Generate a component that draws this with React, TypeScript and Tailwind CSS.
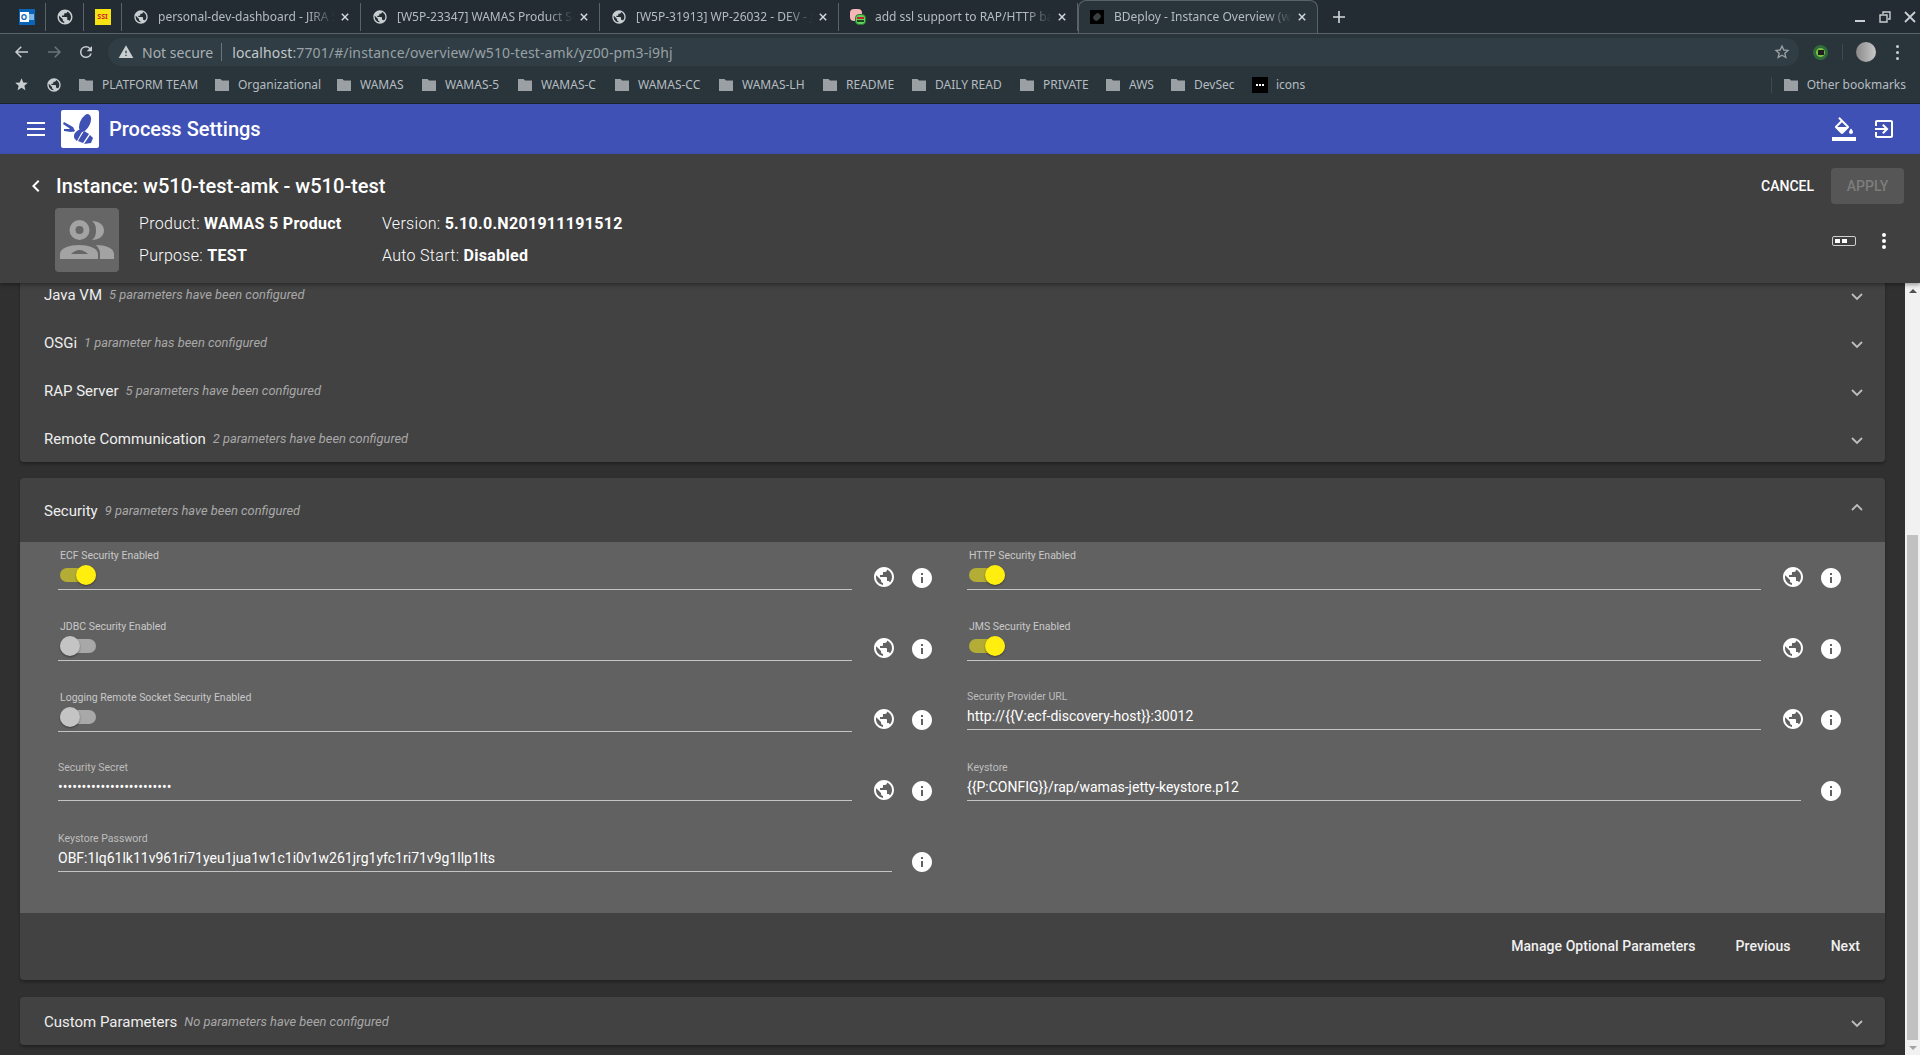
import type { ReactNode } from 'react';

const PUBLIC_ICON =
  'M12 2C6.48 2 2 6.48 2 12s4.48 10 10 10 10-4.48 10-10S17.52 2 12 2zm-1 17.93c-3.95-.49-7-3.85-7-7.93 0-.62.08-1.21.21-1.79L9 15v1c0 1.1.9 2 2 2v1.93zm6.9-2.54c-.26-.81-1-1.39-1.9-1.39h-1v-3c0-.55-.45-1-1-1H8v-2h2c.55 0 1-.45 1-1V7h2c1.1 0 2-.9 2-2v-.41c2.93 1.19 5 4.06 5 7.41 0 2.08-.8 3.97-2.1 5.39z';
const INFO_ICON =
  'M12 2C6.48 2 2 6.48 2 12s4.48 10 10 10 10-4.48 10-10S17.52 2 12 2zm1 15h-2v-6h2v6zm0-8h-2V7h2v2z';
const FOLDER_ICON = 'M1 2h5.500L8 3.500h7V14H1z';

function Icon({ d, className }: { d: string; className?: string }) {
  return (
    <svg viewBox="0 0 24 24" fill="currentColor" className={className}>
      <path d={d} />
    </svg>
  );
}

function Globe({ className = 'w-[18px] h-[18px] text-[#c9ced1]' }: { className?: string }) {
  return <Icon d={PUBLIC_ICON} className={className} />;
}

function Folder() {
  return (
    <svg viewBox="0 0 16 16" fill="currentColor" className="w-4 h-4 text-[#9aa0a3] shrink-0">
      <path d={FOLDER_ICON} />
    </svg>
  );
}

function CloseX() {
  return (
    <svg viewBox="0 0 10 10" className="w-2 h-2 shrink-0 text-[#d5d9db]" stroke="currentColor" strokeWidth="1.8" fill="none">
      <path d="M1 1l8 8M9 1l-8 8" />
    </svg>
  );
}

function Tab({ icon, title, active }: { icon: ReactNode; title: string; active?: boolean }) {
  return (
    <div
      className={
        active
          ? 'w-[240px] h-[33px] pl-[10px] pr-[11px] flex items-center rounded-t-lg bg-[#2a353b] border border-b-0 border-[#59626a]'
          : 'w-[239px] h-[28px] mt-[3px] pl-[11px] pr-[11px] flex items-center border-r border-[#59626a]'
      }
    >
      <div className="w-4 h-4 mr-[9px] shrink-0 flex items-center justify-center">{icon}</div>
      <div className="flex-1 min-w-0 overflow-hidden whitespace-nowrap text-[12px] text-[#b5bcc0] [mask-image:linear-gradient(to_right,black_85%,transparent)]">
        {title}
      </div>
      <div className="ml-[6px]">
        <CloseX />
      </div>
    </div>
  );
}

function PinnedTab({ children }: { children: ReactNode }) {
  return (
    <div className="w-[38px] h-[28px] mt-[3px] flex items-center justify-center border-r border-[#59626a]">
      {children}
    </div>
  );
}

function TabStrip() {
  return (
    <div className="h-[34px] bg-[#222c32] border-b border-[#59626a] flex items-start pl-2 relative">
      <PinnedTab>
        <div className="w-4 h-4 bg-[#0a64b8] flex items-center pl-[1px]">
          <div className="w-[9px] h-[10px] bg-white text-[#0a64b8] text-[8px] leading-[10px] font-bold text-center">O</div>
          <div className="w-[5px] h-[6px] bg-[#7fb6ea]" />
        </div>
      </PinnedTab>
      <PinnedTab>
        <Globe />
      </PinnedTab>
      <PinnedTab>
        <div className="w-4 h-4 bg-[#f6e312] text-[#d2202c] text-[7px] font-bold flex items-center justify-center">SSI</div>
      </PinnedTab>
      <Tab icon={<Globe />} title="personal-dev-dashboard - JIRA Software" />
      <Tab icon={<Globe />} title="[W5P-23347] WAMAS Product Security" />
      <Tab icon={<Globe />} title="[W5P-31913] WP-26032 - DEV - JIRA" />
      <Tab
        icon={
          <div className="w-4 h-4 relative">
            <div className="w-3 h-3 rounded-sm bg-[#f4b6b6]" />
            <div className="absolute right-0 bottom-0 w-[11px] h-[11px] rounded-sm bg-[#5fd35f] border border-[#2f7a2f] flex flex-col items-center justify-center gap-px">
              <div className="w-[7px] h-[2px] bg-[#c8202c]" />
              <div className="w-[7px] h-[2px] bg-[#1f4a1f]" />
            </div>
          </div>
        }
        title="add ssl support to RAP/HTTP backend"
      />
      <Tab
        icon={
          <div className="w-[14px] h-[14px] bg-black flex items-center justify-center">
            <div className="w-[6px] h-2 rotate-45 rounded-sm bg-[#3a3f42]" />
          </div>
        }
        title="BDeploy - Instance Overview (w510)"
        active
      />
      <div className="ml-[15px] h-[33px] flex items-center text-[#d5d9db]">
        <svg viewBox="0 0 12 12" className="w-3 h-3" stroke="currentColor" strokeWidth="1.6">
          <path d="M6 0v12M0 6h12" />
        </svg>
      </div>
      <div className="ml-auto h-[33px] flex items-center gap-[13px] pr-[4px] text-[#c9ced1]">
        <svg viewBox="0 0 12 12" className="w-3 h-3" fill="currentColor">
          <path d="M1 9h10v2H1z" />
        </svg>
        <svg viewBox="0 0 12 12" className="w-3 h-3" stroke="currentColor" strokeWidth="1.4" fill="none">
          <path d="M4 3V1h7v7H9M1 4h7v7H1z" />
        </svg>
        <svg viewBox="0 0 12 12" className="w-3 h-3" stroke="currentColor" strokeWidth="1.8" fill="none">
          <path d="M1 1l10 10M11 1L1 11" />
        </svg>
      </div>
    </div>
  );
}

function AddressBar() {
  return (
    <div className="h-[32px] pt-1 bg-[#2a353b] flex items-center">
      <div className="w-[108px] pl-[13px] flex items-center gap-[14px] text-[#c9ced1]">
        <svg viewBox="0 0 24 24" className="w-[18px] h-[18px]" fill="none" stroke="currentColor" strokeWidth="2">
          <path d="M20 12H5M11 5l-7 7 7 7" />
        </svg>
        <svg viewBox="0 0 24 24" className="w-[18px] h-[18px] text-[#6b7478]" fill="none" stroke="currentColor" strokeWidth="2">
          <path d="M4 12h15M13 5l7 7-7 7" />
        </svg>
        <svg viewBox="0 0 24 24" className="w-[18px] h-[18px]" fill="currentColor">
          <path d="M17.65 6.35A7.96 7.96 0 0 0 12 4a8 8 0 1 0 7.74 10h-2.08A6 6 0 1 1 12 6c1.66 0 3.14.69 4.22 1.78L13 11h7V4l-2.35 2.35z" />
        </svg>
      </div>
      <div className="w-[1691px] h-[28px] rounded-full bg-[#303d44] flex items-center pl-[10px] pr-[9px] text-[14px]">
        <svg viewBox="0 0 24 24" className="w-4 h-4 text-[#c9ced1] mr-[8px]" fill="currentColor">
          <path d="M1 21h22L12 2 1 21zm12-3h-2v-2h2v2zm0-4h-2v-4h2v4z" />
        </svg>
        <span className="text-[#a8b0b4]">Not secure</span>
        <div className="w-px h-[18px] bg-[#6b7478] ml-[8px] mr-[10px]" />
        <span className="text-[#c2c8cb] tracking-[0.12px]">localhost</span>
        <span className="text-[#98a1a6] tracking-[0.12px]">:7701/#/instance/overview/w510-test-amk/yz00-pm3-i9hj</span>
        <svg viewBox="0 0 24 24" className="w-4 h-4 ml-auto text-[#9aa0a3]" fill="none" stroke="currentColor" strokeWidth="2">
          <path d="M12 3l2.7 6 6.3.6-4.8 4.2 1.5 6.4L12 16.9l-5.700 3.300 1.500-6.400L3 9.600 9.300 9z" />
        </svg>
      </div>
      <div className="flex-1 flex items-center">
        <div className="ml-[14px] w-[15px] h-[15px] rounded-full bg-[#7ac143] border-[3px] border-[#2f6b3a] flex items-center justify-center">
          <div className="w-[6px] h-[5px] bg-[#1f1f1f]" />
        </div>
        <div className="w-px h-4 bg-[#3f4a50] ml-[14px]" />
        <div className="ml-[13px] w-5 h-5 rounded-full bg-gradient-to-r from-[#8a8a8a] to-[#c8c8c8]" />
        <div className="ml-[20px] flex flex-col gap-[3px]">
          <div className="w-[3px] h-[3px] rounded-full bg-[#c9ced1]" />
          <div className="w-[3px] h-[3px] rounded-full bg-[#c9ced1]" />
          <div className="w-[3px] h-[3px] rounded-full bg-[#c9ced1]" />
        </div>
      </div>
    </div>
  );
}

const bookmarks = [
  { name: 'PLATFORM TEAM', width: 'w-[136px]' },
  { name: 'Organizational', width: 'w-[122px]' },
  { name: 'WAMAS', width: 'w-[85px]' },
  { name: 'WAMAS-5', width: 'w-[96px]' },
  { name: 'WAMAS-C', width: 'w-[97px]' },
  { name: 'WAMAS-CC', width: 'w-[104px]' },
  { name: 'WAMAS-LH', width: 'w-[104px]' },
  { name: 'README', width: 'w-[89px]' },
  { name: 'DAILY READ', width: 'w-[108px]' },
  { name: 'PRIVATE', width: 'w-[86px]' },
  { name: 'AWS', width: 'w-[65px]' },
  { name: 'DevSec', width: 'w-[82px]' },
];

function Bookmarks() {
  return (
    <div className="h-[38px] bg-[#2a353b] border-b border-[#1c2327] flex items-center pl-[14px] text-[12px] text-[#b5bcc0]">
      <svg viewBox="0 0 24 24" className="w-[15px] h-[15px] text-[#c9ced1] mr-[17px]" fill="currentColor">
        <path d="M12 17.3l6.2 3.7-1.6-7L22 9.2l-7.2-.6L12 2 9.2 8.6 2 9.2 7.4 14l-1.6 7z" />
      </svg>
      <Globe className="w-4 h-4 text-[#c9ced1] mr-[16px]" />
      {bookmarks.map((b) => (
        <div key={b.name} className={`${b.width} flex items-center gap-[8px]`}>
          <Folder />
          <span>{b.name}</span>
        </div>
      ))}
      <div className="w-4 h-4 bg-black flex items-center justify-center gap-px mr-[8px]">
        <div className="w-[2px] h-[2px] bg-white" />
        <div className="w-[2px] h-[2px] bg-white" />
        <div className="w-[2px] h-[2px] bg-white" />
      </div>
      <span>icons</span>
      <div className="ml-auto flex items-center pr-[14px]">
        <div className="w-px h-4 bg-[#3f4a50] mr-[11px]" />
        <Folder />
        <span className="ml-[8px]">Other bookmarks</span>
      </div>
    </div>
  );
}

function AppToolbar() {
  return (
    <div className="h-[50px] bg-[#3f51b5] flex items-center pl-[27px] pr-[24px] text-white">
      <svg viewBox="0 0 18 14" className="w-[18px] h-[14px]" fill="currentColor">
        <path d="M0 0h18v2H0zM0 6h18v2H0zM0 12h18v2H0z" />
      </svg>
      <div className="ml-[16px] w-[38px] h-[38px] bg-white rounded-[2px] flex items-center justify-center">
        <svg viewBox="0 0 38 38" className="w-[38px] h-[38px]" fill="#3f51b5">
          <ellipse cx="24" cy="13" rx="5" ry="9.5" transform="rotate(25 24 13)" />
          <path d="M14 23c3-4 6-4 8-3l-6 11c-3-2-4-5-2-8z" />
          <path d="M23 21l5 3-6 9-5-2z" />
          <path d="M29 25l3 3-2 5-7 1z" />
          <path d="M3 12l9 5 2 4-2 1-4-4-6-4zM3 19l8 0 2 2-3 1-7-1z" />
        </svg>
      </div>
      <div className="ml-[10px] font-medium text-[20px]">Process Settings</div>
      <svg viewBox="0 0 24 24" className="ml-auto w-6 h-6" fill="currentColor">
        <path d="M16.56 8.94L7.62 0 6.21 1.41l2.38 2.38-5.15 5.15c-.59.59-.59 1.54 0 2.12l5.5 5.5c.29.29.68.44 1.06.44s.77-.15 1.06-.44l5.5-5.5c.59-.58.59-1.53 0-2.12zM5.21 10L10 5.21 14.79 10H5.21zM19 11.5s-2 2.17-2 3.5c0 1.1.9 2 2 2s2-.9 2-2c0-1.33-2-3.5-2-3.5z" />
        <path d="M0 20h24v4H0z" />
      </svg>
      <svg viewBox="0 0 24 24" className="ml-[16px] w-6 h-6" fill="currentColor">
        <path d="M10.09 15.59L11.5 17l5-5-5-5-1.41 1.41L12.67 11H3v2h9.67l-2.58 2.59zM19 3H5c-1.11 0-2 .9-2 2v4h2V5h14v14H5v-4H3v4c0 1.1.89 2 2 2h14c1.1 0 2-.9 2-2V5c0-1.1-.9-2-2-2z" />
      </svg>
    </div>
  );
}

function InstanceHeader() {
  return (
    <div className="relative z-10 h-[129px] shrink-0 bg-[#404041] shadow-[0_2px_4px_rgba(0,0,0,0.35)] text-white">
      <div className="flex items-center h-[64px] pt-[14px] pb-[14px] pl-[24px] pr-[16px]">
        <svg viewBox="0 0 24 24" className="w-6 h-6" fill="currentColor">
          <path d="M15.41 7.41L14 6l-6 6 6 6 1.41-1.41L10.83 12z" />
        </svg>
        <div className="ml-[8px] text-[20px] font-medium">Instance: w510-test-amk - w510-test</div>
        <div className="ml-auto text-[14px] font-medium">CANCEL</div>
        <div className="ml-[17px] w-[73px] h-9 rounded bg-[#565656] text-[#7d7d7d] text-[14px] font-medium flex items-center justify-center">
          APPLY
        </div>
      </div>
      <div className="flex pl-[55px] pr-[24px] -mt-[10px]">
        <div className="w-16 h-16 rounded bg-[#666666]">
          <svg viewBox="0 0 64 64" className="w-16 h-16" fill="#a3a3a3" fillRule="evenodd">
            <path d="M24.5 12a10 10 0 1 1 0 20 10 10 0 1 1 0-20zm0 6a4 4 0 1 0 0 8 4 4 0 1 0 0-8z" />
            <path d="M37 13c7 0 12 4 12 9.500S44 32 37 32c3-2 4-5.500 4-9.500S40 15 37 13z" />
            <path d="M5 51v-5c0-6 10-9 19-9s19 3 19 9v5zm11-5h17c-2-2-5.500-4-8.500-4s-6.500 2-8.500 4z" />
            <path d="M41 37c9 0 18 3 18 9v5H45v-6c0-3-2-6-4-8z" />
          </svg>
        </div>
        <div className="ml-5 grid grid-cols-[243px_auto] text-[16px] font-light leading-[32px] tracking-[0.3px]">
          <div>
            Product: <span className="font-bold">WAMAS 5 Product</span>
          </div>
          <div>
            Version: <span className="font-bold">5.10.0.N201911191512</span>
          </div>
          <div>
            Purpose: <span className="font-bold">TEST</span>
          </div>
          <div>
            Auto Start: <span className="font-bold">Disabled</span>
          </div>
        </div>
        <div className="ml-auto mt-[21px] flex items-center h-6">
          <svg viewBox="0 0 24 10" className="w-6 h-[10px]">
            <rect x="0.5" y="0.500" width="23" height="9" rx="1.500" fill="none" stroke="#d0d0d0" />
            <rect x="3" y="3" width="5" height="4" fill="#fff" />
            <rect x="10" y="3" width="5" height="4" fill="#fff" />
          </svg>
          <svg viewBox="0 0 24 24" className="ml-[16px] w-6 h-6" fill="currentColor">
            <path d="M12 8a2 2 0 1 0 0-4 2 2 0 0 0 0 4zm0 2a2 2 0 1 0 0 4 2 2 0 0 0 0-4zm0 6a2 2 0 1 0 0 4 2 2 0 0 0 0-4z" />
          </svg>
        </div>
      </div>
    </div>
  );
}

function Chevron({ up }: { up?: boolean }) {
  return (
    <svg viewBox="0 0 12 8" className="w-3 h-2 text-[#bdbdbd]" fill="none" stroke="currentColor" strokeWidth="1.8">
      <path d={up ? 'M1 7l5-5 5 5' : 'M1 1l5 5 5-5'} />
    </svg>
  );
}

function PanelTitle({ title, note, up }: { title: string; note: string; up?: boolean }) {
  return (
    <div className="flex items-center h-full pt-[2px] pl-6 pr-[22px]">
      <span className="text-[15px] text-[#eeeeee]">{title}</span>
      <span className="ml-[7px] text-[12.87px] italic text-[#a8a8a8]">{note}</span>
      <div className={up ? 'ml-auto -mt-2' : 'ml-auto mt-1'}>
        <Chevron up={up} />
      </div>
    </div>
  );
}

function Toggle({ on }: { on?: boolean }) {
  return (
    <div className="relative w-9 h-5 ml-[2px] flex items-center">
      <div className={on ? 'w-9 h-[14px] rounded-full bg-[#b3ad35]' : 'w-9 h-[14px] rounded-full bg-[#a8a8a8]'} />
      <div
        className={
          on
            ? 'absolute left-4 top-0 w-5 h-5 rounded-full bg-[#ffee0e] shadow-[0_1px_2px_rgba(0,0,0,0.4)]'
            : 'absolute left-0 top-0 w-5 h-5 rounded-full bg-[#c4c4c4] shadow-[0_1px_2px_rgba(0,0,0,0.4)]'
        }
      />
    </div>
  );
}

interface Param {
  label: string;
  toggle?: boolean;
  on?: boolean;
  value?: string;
  global?: boolean;
}

const params: Param[] = [
  { label: 'ECF Security Enabled', toggle: true, on: true, global: true },
  { label: 'HTTP Security Enabled', toggle: true, on: true, global: true },
  { label: 'JDBC Security Enabled', toggle: true, global: true },
  { label: 'JMS Security Enabled', toggle: true, on: true, global: true },
  { label: 'Logging Remote Socket Security Enabled', toggle: true, global: true },
  { label: 'Security Provider URL', value: 'http://{{V:ecf-discovery-host}}:30012', global: true },
  { label: 'Security Secret', value: '••••••••••••••••••••••••', global: true },
  { label: 'Keystore', value: '{{P:CONFIG}}/rap/wamas-jetty-keystore.p12' },
  { label: 'Keystore Password', value: 'OBF:1lq61lk11v961ri71yeu1jua1w1c1i0v1w261jrg1yfc1ri71v9g1llp1lts' },
];

function ParamField({ p }: { p: Param }) {
  return (
    <div className="flex h-11">
      {p.toggle ? (
        <div className="flex-1 min-w-0 h-11 border-b border-[#c4c4c4]">
          <div className="mt-1 ml-[2px] h-3 leading-3 text-[10.5px] text-[#c8c8c8]">{p.label}</div>
          <div className="mt-[3px]">
            <Toggle on={p.on} />
          </div>
        </div>
      ) : (
        <div className="flex-1 min-w-0 h-[42px] border-b border-[#c4c4c4]">
          <div className="mt-[3px] h-3 leading-3 text-[10.5px] text-[#bdbdbd]">{p.label}</div>
          <div className="mt-[3px] h-5 leading-5 text-[14px] text-white whitespace-nowrap">{p.value}</div>
        </div>
      )}
      {p.global && <Icon d={PUBLIC_ICON} className="ml-5 mt-[19px] w-6 h-6 text-white shrink-0" />}
      <Icon d={INFO_ICON} className={p.global ? 'ml-[14px] mt-5 w-6 h-6 text-white shrink-0' : 'ml-[18px] mt-5 w-6 h-6 text-white shrink-0'} />
    </div>
  );
}

function SecurityPanel() {
  return (
    <div className="mt-4 rounded bg-[#424242] shadow-[0_2px_3px_rgba(0,0,0,0.3)]">
      <div className="h-16">
        <PanelTitle title="Security" note="9 parameters have been configured" up />
      </div>
      <div className="h-[371px] bg-[#616161] pt-1 pl-[38px] pr-[42px] grid grid-cols-2 gap-x-[33px] gap-y-[27px] content-start">
        {params.map((p) => (
          <ParamField key={p.label} p={p} />
        ))}
      </div>
      <div className="h-[67px] flex items-center justify-end pr-[9px] gap-2 text-[14px] font-medium text-[#f0f0f0] tracking-[0.06px]">
        <div className="px-4">Manage Optional Parameters</div>
        <div className="px-4">Previous</div>
        <div className="px-4">Next</div>
      </div>
    </div>
  );
}

const collapsed = [
  { title: 'Java VM', note: '5 parameters have been configured' },
  { title: 'OSGi', note: '1 parameter has been configured' },
  { title: 'RAP Server', note: '5 parameters have been configured' },
  { title: 'Remote Communication', note: '2 parameters have been configured' },
];

export default function App() {
  return (
    <div className="w-[1920px] h-[1055px] overflow-hidden flex flex-col bg-[#303030] font-['Roboto',sans-serif]">
      <div className="font-['Noto_Sans',sans-serif]">
        <TabStrip />
        <AddressBar />
        <Bookmarks />
      </div>
      <AppToolbar />
      <InstanceHeader />
      <div className="flex-1 min-h-0 flex">
        <div className="w-[1905px] overflow-hidden px-5">
          <div className="-mt-[13px]">
            <div className="rounded-b bg-[#424242] shadow-[0_2px_3px_rgba(0,0,0,0.3)]">
              {collapsed.map((c) => (
                <div key={c.title} className="h-12">
                  <PanelTitle title={c.title} note={c.note} />
                </div>
              ))}
            </div>
            <SecurityPanel />
            <div className="mt-[17px] h-12 rounded bg-[#424242] shadow-[0_2px_3px_rgba(0,0,0,0.3)]">
              <PanelTitle title="Custom Parameters" note="No parameters have been configured" />
            </div>
          </div>
        </div>
        <div className="w-[15px] bg-[#f1f1f1] flex flex-col items-center">
          <div className="h-[15px] flex items-center justify-center">
            <div className="w-0 h-0 border-x-4 border-x-transparent border-b-4 border-b-[#505050]" />
          </div>
          <div className="mt-[237px] w-[11px] flex-1 bg-[#c1c1c1]" />
          <div className="h-[15px] flex items-center justify-center">
            <div className="w-0 h-0 border-x-4 border-x-transparent border-t-4 border-t-[#a3a3a3]" />
          </div>
        </div>
      </div>
    </div>
  );
}
